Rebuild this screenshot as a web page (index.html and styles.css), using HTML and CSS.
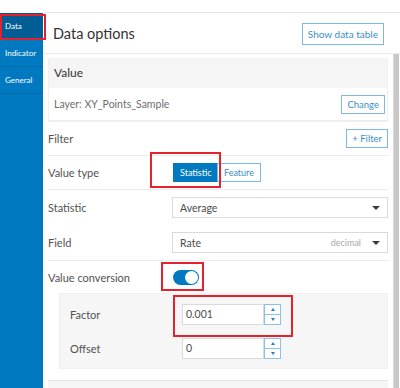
FILE: index.html
```html
<!DOCTYPE html>
<html lang="en">
<head>
    <meta charset="UTF-8">
    <title>Data options</title>
    <link rel="stylesheet" href="styles.css">
</head>
<body>
    <div class="top-gap"></div>
    <div class="app">
        <nav class="sidebar">
            <div class="nav-item active">Data</div>
            <div class="nav-item">Indicator</div>
            <div class="nav-item">General</div>
        </nav>
        <div class="main">
            <div class="main-header">
                <h1>Data options</h1>
                <button class="btn">Show data table</button>
            </div>
            <div class="main-body">
                <div class="panel-list">
                    <div class="section">
                        <div class="section-title">Value</div>
                        <div class="layer-row">
                            <span class="layer-name">Layer: XY_Points_Sample</span>
                            <button class="btn btn-small">Change</button>
                        </div>
                    </div>
                    <div class="row">
                        <span class="label">Filter</span>
                        <button class="btn btn-small btn-right">+ Filter</button>
                    </div>
                    <div class="row">
                        <span class="label">Value type</span>
                        <div class="segmented">
                            <button class="seg seg-on">Statistic</button>
                            <button class="seg">Feature</button>
                        </div>
                    </div>
                    <div class="row row-plain">
                        <span class="label">Statistic</span>
                        <div class="select">
                            <span>Average</span>
                            <span class="caret"></span>
                        </div>
                    </div>
                    <div class="row row-field">
                        <span class="label">Field</span>
                        <div class="select">
                            <span>Rate</span>
                            <span class="select-right"><span class="hint">decimal</span><span class="caret"></span></span>
                        </div>
                    </div>
                    <div class="row row-toggle">
                        <span class="label">Value conversion</span>
                        <span class="toggle"><span class="knob"></span></span>
                    </div>
                    <div class="subpanel">
                        <div class="sub-row">
                            <span class="sub-label">Factor</span>
                            <div class="number">
                                <span class="number-value">0.001</span>
                                <span class="spin">
                                    <span class="spin-btn"><span class="tri-up"></span></span>
                                    <span class="spin-btn"><span class="tri-down"></span></span>
                                </span>
                            </div>
                        </div>
                        <div class="sub-row">
                            <span class="sub-label">Offset</span>
                            <div class="number">
                                <span class="number-value">0</span>
                                <span class="spin">
                                    <span class="spin-btn"><span class="tri-up"></span></span>
                                    <span class="spin-btn"><span class="tri-down"></span></span>
                                </span>
                            </div>
                        </div>
                    </div>
                    <div class="section-next"></div>
                </div>
                <div class="scrollbar"></div>
            </div>
        </div>
    </div>

    <!-- red annotation boxes -->
    <div class="mark mark-data"></div>
    <div class="mark mark-type"></div>
    <div class="mark mark-toggle"></div>
    <div class="mark mark-factor"></div>
</body>
</html>
```

FILE: styles.css
```css
* {
    margin: 0;
    padding: 0;
    box-sizing: border-box;
}

body {
    width: 400px;
    height: 388px;
    overflow: hidden;
    background: #fff;
    color: #4c4c4c;
    font-family: Lato, "Open Sans", sans-serif;
    position: relative;
}

.top-gap {
    height: 13px;
}

.app {
    display: flex;
    height: 375px;
}

.sidebar {
    width: 43px;
    background: #0079c1;
}

.nav-item {
    height: 27px;
    padding-left: 5px;
    line-height: 26px;
    font-size: 8px;
    color: #fff;
    border-bottom: 1px solid #006aa9;
}

.nav-item.active {
    background: #005e95;
}

.main {
    flex: 1;
    display: flex;
    flex-direction: column;
    margin-top: -1px;
    border-top: 1px solid #e6e6e6;
}

.main-header {
    height: 41px;
    display: flex;
    align-items: center;
    justify-content: space-between;
    padding: 0 16px 0 10px;
    border-bottom: 1px solid #ececec;
}

.main-header h1 {
    font-size: 14.5px;
    font-weight: normal;
    color: #323232;
}

.btn {
    font-family: inherit;
    background: #fff;
    color: #3b8dc8;
    border: 1px solid #7db8e3;
    height: 22px;
    padding: 0 5px;
    font-size: 10px;
    margin-top: 2px;
}

.btn-small {
    height: 19px;
    font-size: 9.5px;
    margin-top: 0;
    padding: 0 5px;
}

.main-body {
    flex: 1;
    display: flex;
    overflow: hidden;
}

.panel-list {
    flex: 1;
    padding: 4px 5px 0 5px;
}

.scrollbar {
    width: 6px;
    margin-right: 1px;
    background: #c8c8c8;
    border-left: 1px solid #d8d8d8;
}

.section {
    border: 1px solid #f0f0f0;
    border-top: none;
}

.section-title {
    height: 30px;
    line-height: 30px;
    padding-left: 5px;
    background: #f5f5f5;
    font-size: 12px;
    color: #323232;
}

.layer-row {
    height: 33px;
    display: flex;
    align-items: center;
    justify-content: space-between;
    padding: 0 2px 0 5px;
    border-bottom: 1px solid #ececec;
}

.layer-name {
    font-size: 10.5px;
    color: #6e6e6e;
}

.row {
    display: flex;
    align-items: center;
    height: 34px;
    border-bottom: 1px solid #ececec;
}

.row-plain {
    height: 35px;
    border-bottom: none;
}

.row-field {
    height: 36px;
}

.row-toggle {
    height: 32px;
    border-bottom: none;
}

.label {
    width: 124px;
    font-size: 11px;
    color: #525252;
}

.btn-right {
    margin-left: auto;
}

.segmented {
    display: flex;
    margin-left: 1px;
}

.seg {
    font-family: inherit;
    height: 19px;
    font-size: 9px;
    padding: 0 6px;
    background: #fff;
    color: #3b8dc8;
    border: 1px solid #7db8e3;
}

.seg-on {
    background: #0079c1;
    border-color: #0079c1;
    color: #fff;
    width: 44px;
}

.select {
    flex: 1;
    height: 21px;
    display: flex;
    align-items: center;
    justify-content: space-between;
    padding: 0 7px 0 7px;
    border: 1px solid #dadada;
    font-size: 10.5px;
    color: #4c4c4c;
}

.select-right {
    display: flex;
    align-items: center;
}

.hint {
    font-size: 9px;
    color: #a8a8a8;
    margin-right: 11px;
}

.caret {
    width: 0;
    height: 0;
    border-left: 4px solid transparent;
    border-right: 4px solid transparent;
    border-top: 4px solid #3c3c3c;
}

.toggle {
    position: relative;
    width: 26px;
    height: 15px;
    margin-left: 1px;
    border-radius: 8px;
    background: #0079c1;
}

.knob {
    position: absolute;
    right: 1px;
    top: 1px;
    width: 13px;
    height: 13px;
    border-radius: 50%;
    background: #fff;
}

.subpanel {
    margin-left: 11px;
    background: #f6f6f6;
    border: 1px solid #f0f0f0;
    padding: 3px 0 3px 10px;
}

.sub-row {
    display: flex;
    align-items: center;
    height: 34px;
}

.sub-label {
    width: 112px;
    font-size: 11px;
    color: #525252;
}

.number {
    display: flex;
    height: 21px;
}

.number-value {
    width: 82px;
    height: 21px;
    line-height: 19px;
    padding-left: 3px;
    background: #fff;
    border: 1px solid #dadada;
    font-size: 10.5px;
    color: #4c4c4c;
}

.spin {
    display: flex;
    flex-direction: column;
    width: 17px;
}

.spin-btn {
    flex: 1;
    display: flex;
    align-items: center;
    justify-content: center;
    background: #fff;
    border: 1px solid #8cc0e6;
}

.spin-btn + .spin-btn {
    border-top: none;
}

.tri-up {
    width: 0;
    height: 0;
    border-left: 2.5px solid transparent;
    border-right: 2.5px solid transparent;
    border-bottom: 3px solid #2a7fc0;
}

.tri-down {
    width: 0;
    height: 0;
    border-left: 2.5px solid transparent;
    border-right: 2.5px solid transparent;
    border-top: 3px solid #2a7fc0;
}

.section-next {
    margin-top: 11px;
    height: 20px;
    background: #f5f5f5;
    border-top: 1px solid #e6e6e6;
}

.mark {
    position: absolute;
    border: 2px solid #e3222b;
}

.mark-data {
    left: 0;
    top: 14px;
    width: 46px;
    height: 26px;
}

.mark-type {
    left: 150px;
    top: 152px;
    width: 71px;
    height: 36px;
}

.mark-toggle {
    left: 161px;
    top: 262px;
    width: 43px;
    height: 29px;
}

.mark-factor {
    left: 173px;
    top: 295px;
    width: 120px;
    height: 42px;
}
```
